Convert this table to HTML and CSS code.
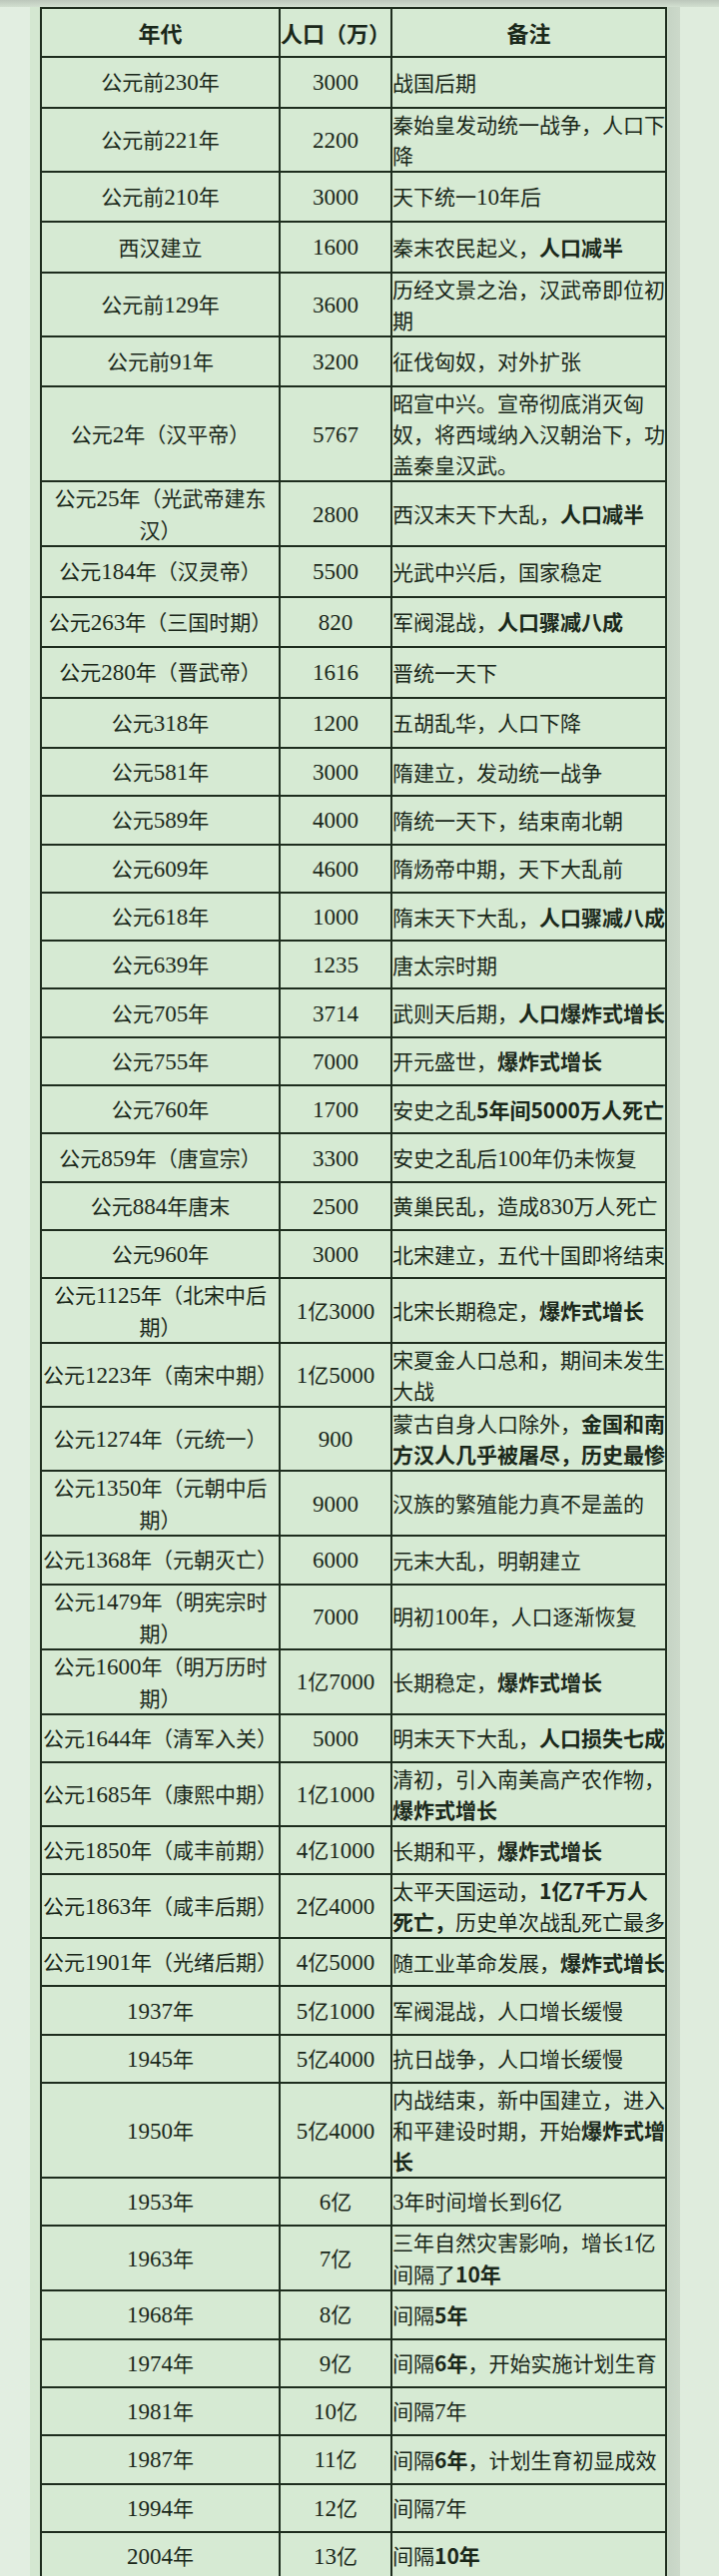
FILE: index.html
```html
<!DOCTYPE html>
<html lang="zh-CN">
<head>
<meta charset="utf-8">
<title>中国历代人口</title>
<link rel="stylesheet" href="styles.css">
</head>
<body>
<div class="page">
<table class="pop">
<colgroup><col class="c1"><col class="c2"><col class="c3"></colgroup>
<thead>
<tr class="head"><th>年代</th><th>人口（万）</th><th>备注</th></tr>
</thead>
<tbody>
<tr class="lg"><td class="y">公元前<span class="n">230</span>年</td><td class="p"><span class="n">3000</span></td><td class="t">战国后期</td></tr>
<tr><td class="y">公元前<span class="n">221</span>年</td><td class="p"><span class="n">2200</span></td><td class="t">秦始皇发动统一战争，人口下<br>降</td></tr>
<tr class="lg"><td class="y">公元前<span class="n">210</span>年</td><td class="p"><span class="n">3000</span></td><td class="t">天下统一<span class="n">10</span>年后</td></tr>
<tr class="lg"><td class="y">西汉建立</td><td class="p"><span class="n">1600</span></td><td class="t">秦末农民起义，<b>人口减半</b></td></tr>
<tr><td class="y">公元前<span class="n">129</span>年</td><td class="p"><span class="n">3600</span></td><td class="t">历经文景之治，汉武帝即位初<br>期</td></tr>
<tr class="lg"><td class="y">公元前<span class="n">91</span>年</td><td class="p"><span class="n">3200</span></td><td class="t">征伐匈奴，对外扩张</td></tr>
<tr><td class="y">公元<span class="n">2</span>年（汉平帝）</td><td class="p"><span class="n">5767</span></td><td class="t">昭宣中兴。宣帝彻底消灭匈<br>奴，将西域纳入汉朝治下，功<br>盖秦皇汉武。</td></tr>
<tr><td class="y">公元<span class="n">25</span>年（光武帝建东<br>汉）</td><td class="p"><span class="n">2800</span></td><td class="t">西汉末天下大乱，<b>人口减半</b></td></tr>
<tr class="lg"><td class="y">公元<span class="n">184</span>年（汉灵帝）</td><td class="p"><span class="n">5500</span></td><td class="t">光武中兴后，国家稳定</td></tr>
<tr class="lg"><td class="y">公元<span class="n">263</span>年（三国时期）</td><td class="p"><span class="n">820</span></td><td class="t">军阀混战，<b>人口骤减八成</b></td></tr>
<tr class="lg"><td class="y">公元<span class="n">280</span>年（晋武帝）</td><td class="p"><span class="n">1616</span></td><td class="t">晋统一天下</td></tr>
<tr class="lg"><td class="y">公元<span class="n">318</span>年</td><td class="p"><span class="n">1200</span></td><td class="t">五胡乱华，人口下降</td></tr>
<tr><td class="y">公元<span class="n">581</span>年</td><td class="p"><span class="n">3000</span></td><td class="t">隋建立，发动统一战争</td></tr>
<tr><td class="y">公元<span class="n">589</span>年</td><td class="p"><span class="n">4000</span></td><td class="t">隋统一天下，结束南北朝</td></tr>
<tr><td class="y">公元<span class="n">609</span>年</td><td class="p"><span class="n">4600</span></td><td class="t">隋炀帝中期，天下大乱前</td></tr>
<tr><td class="y">公元<span class="n">618</span>年</td><td class="p"><span class="n">1000</span></td><td class="t">隋末天下大乱，<b>人口骤减八成</b></td></tr>
<tr><td class="y">公元<span class="n">639</span>年</td><td class="p"><span class="n">1235</span></td><td class="t">唐太宗时期</td></tr>
<tr><td class="y">公元<span class="n">705</span>年</td><td class="p"><span class="n">3714</span></td><td class="t">武则天后期，<b>人口爆炸式增长</b></td></tr>
<tr><td class="y">公元<span class="n">755</span>年</td><td class="p"><span class="n">7000</span></td><td class="t">开元盛世，<b>爆炸式增长</b></td></tr>
<tr><td class="y">公元<span class="n">760</span>年</td><td class="p"><span class="n">1700</span></td><td class="t">安史之乱<b>5年间5000万人死亡</b></td></tr>
<tr><td class="y">公元<span class="n">859</span>年（唐宣宗）</td><td class="p"><span class="n">3300</span></td><td class="t">安史之乱后<span class="n">100</span>年仍未恢复</td></tr>
<tr><td class="y">公元<span class="n">884</span>年唐末</td><td class="p"><span class="n">2500</span></td><td class="t">黄巢民乱，造成<span class="n">830</span>万人死亡</td></tr>
<tr><td class="y">公元<span class="n">960</span>年</td><td class="p"><span class="n">3000</span></td><td class="t">北宋建立，五代十国即将结束</td></tr>
<tr><td class="y">公元<span class="n">1125</span>年（北宋中后<br>期）</td><td class="p"><span class="n">1</span>亿<span class="n">3000</span></td><td class="t">北宋长期稳定，<b>爆炸式增长</b></td></tr>
<tr><td class="y">公元<span class="n">1223</span>年（南宋中期）</td><td class="p"><span class="n">1</span>亿<span class="n">5000</span></td><td class="t">宋夏金人口总和，期间未发生<br>大战</td></tr>
<tr><td class="y">公元<span class="n">1274</span>年（元统一）</td><td class="p"><span class="n">900</span></td><td class="t">蒙古自身人口除外，<b>金国和南<br>方汉人几乎被屠尽，历史最惨</b></td></tr>
<tr><td class="y">公元<span class="n">1350</span>年（元朝中后<br>期）</td><td class="p"><span class="n">9000</span></td><td class="t">汉族的繁殖能力真不是盖的</td></tr>
<tr><td class="y">公元<span class="n">1368</span>年（元朝灭亡）</td><td class="p"><span class="n">6000</span></td><td class="t">元末大乱，明朝建立</td></tr>
<tr><td class="y">公元<span class="n">1479</span>年（明宪宗时<br>期）</td><td class="p"><span class="n">7000</span></td><td class="t">明初<span class="n">100</span>年，人口逐渐恢复</td></tr>
<tr><td class="y">公元<span class="n">1600</span>年（明万历时<br>期）</td><td class="p"><span class="n">1</span>亿<span class="n">7000</span></td><td class="t">长期稳定，<b>爆炸式增长</b></td></tr>
<tr><td class="y">公元<span class="n">1644</span>年（清军入关）</td><td class="p"><span class="n">5000</span></td><td class="t">明末天下大乱，<b>人口损失七成</b></td></tr>
<tr><td class="y">公元<span class="n">1685</span>年（康熙中期）</td><td class="p"><span class="n">1</span>亿<span class="n">1000</span></td><td class="t">清初，引入南美高产农作物，<br><b>爆炸式增长</b></td></tr>
<tr><td class="y">公元<span class="n">1850</span>年（咸丰前期）</td><td class="p"><span class="n">4</span>亿<span class="n">1000</span></td><td class="t">长期和平，<b>爆炸式增长</b></td></tr>
<tr><td class="y">公元<span class="n">1863</span>年（咸丰后期）</td><td class="p"><span class="n">2</span>亿<span class="n">4000</span></td><td class="t">太平天国运动，<b>1亿7千万人<br>死亡，</b>历史单次战乱死亡最多</td></tr>
<tr><td class="y">公元<span class="n">1901</span>年（光绪后期）</td><td class="p"><span class="n">4</span>亿<span class="n">5000</span></td><td class="t">随工业革命发展，<b>爆炸式增长</b></td></tr>
<tr><td class="y"><span class="n">1937</span>年</td><td class="p"><span class="n">5</span>亿<span class="n">1000</span></td><td class="t">军阀混战，人口增长缓慢</td></tr>
<tr><td class="y"><span class="n">1945</span>年</td><td class="p"><span class="n">5</span>亿<span class="n">4000</span></td><td class="t">抗日战争，人口增长缓慢</td></tr>
<tr><td class="y"><span class="n">1950</span>年</td><td class="p"><span class="n">5</span>亿<span class="n">4000</span></td><td class="t">内战结束，新中国建立，进入<br>和平建设时期，开始<b>爆炸式增<br>长</b></td></tr>
<tr><td class="y"><span class="n">1953</span>年</td><td class="p"><span class="n">6</span>亿</td><td class="t"><span class="n">3</span>年时间增长到<span class="n">6</span>亿</td></tr>
<tr><td class="y"><span class="n">1963</span>年</td><td class="p"><span class="n">7</span>亿</td><td class="t">三年自然灾害影响，增长<span class="n">1</span>亿<br>间隔了<b>10年</b></td></tr>
<tr><td class="y"><span class="n">1968</span>年</td><td class="p"><span class="n">8</span>亿</td><td class="t">间隔<b>5年</b></td></tr>
<tr><td class="y"><span class="n">1974</span>年</td><td class="p"><span class="n">9</span>亿</td><td class="t">间隔<b>6年</b>，开始实施计划生育</td></tr>
<tr><td class="y"><span class="n">1981</span>年</td><td class="p"><span class="n">10</span>亿</td><td class="t">间隔<span class="n">7</span>年</td></tr>
<tr><td class="y"><span class="n">1987</span>年</td><td class="p"><span class="n">11</span>亿</td><td class="t">间隔<b>6年</b>，计划生育初显成效</td></tr>
<tr><td class="y"><span class="n">1994</span>年</td><td class="p"><span class="n">12</span>亿</td><td class="t">间隔<span class="n">7</span>年</td></tr>
<tr><td class="y"><span class="n">2004</span>年</td><td class="p"><span class="n">13</span>亿</td><td class="t">间隔<b>10年</b></td></tr>
</tbody>
</table>
</div>
</body>
</html>
```
FILE: styles.css
```css
html, body {
  margin: 0;
  padding: 0;
}

body {
  width: 720px;
  min-height: 2580px;
  font-family: "Noto Sans CJK SC", "Noto Sans", sans-serif;
  color: #1a281a;
  background: linear-gradient(to right,
    #e2eee1 0, #e2eee1 30px,
    #d4e7d1 30px, #d4e7d1 669px,
    #c6d4c5 669px, #ccd9ca 681px,
    #dfecdd 681px, #dfecdd 720px);
}

.page {
  padding: 7px 0 0 40px;
  background: linear-gradient(to bottom, #bcc7bb 0, #d2dfd0 7px, transparent 7px);
  min-height: 2573px;
}

.pop {
  border-collapse: collapse;
  table-layout: fixed;
  width: 628px;
  background: #d6ead3;
}

.c1 { width: 239px; }
.c2 { width: 112px; }
.c3 { width: 275px; }

.pop th,
.pop td {
  border: 2px solid #1e2d1e;
  padding: 0;
  line-height: 31px;
  font-size: 21px;
  white-space: nowrap;
  vertical-align: middle;
  overflow: hidden;
}

.pop th {
  font-weight: 700;
  font-size: 22px;
  text-align: center;
}

.head { height: 49px; }

.pop tbody tr { height: 48.3px; }
.pop tbody tr.lg { height: 50.5px; }

.y, .p { text-align: center; }

.t {
  text-align: left;
  padding-left: 1px;
}

.n {
  font-family: "Liberation Serif", "DejaVu Serif", serif;
  font-size: 23px;
}

.pop b {
  font-weight: 700;
  font-family: "Noto Sans CJK SC", "Noto Sans", sans-serif;
}
```
